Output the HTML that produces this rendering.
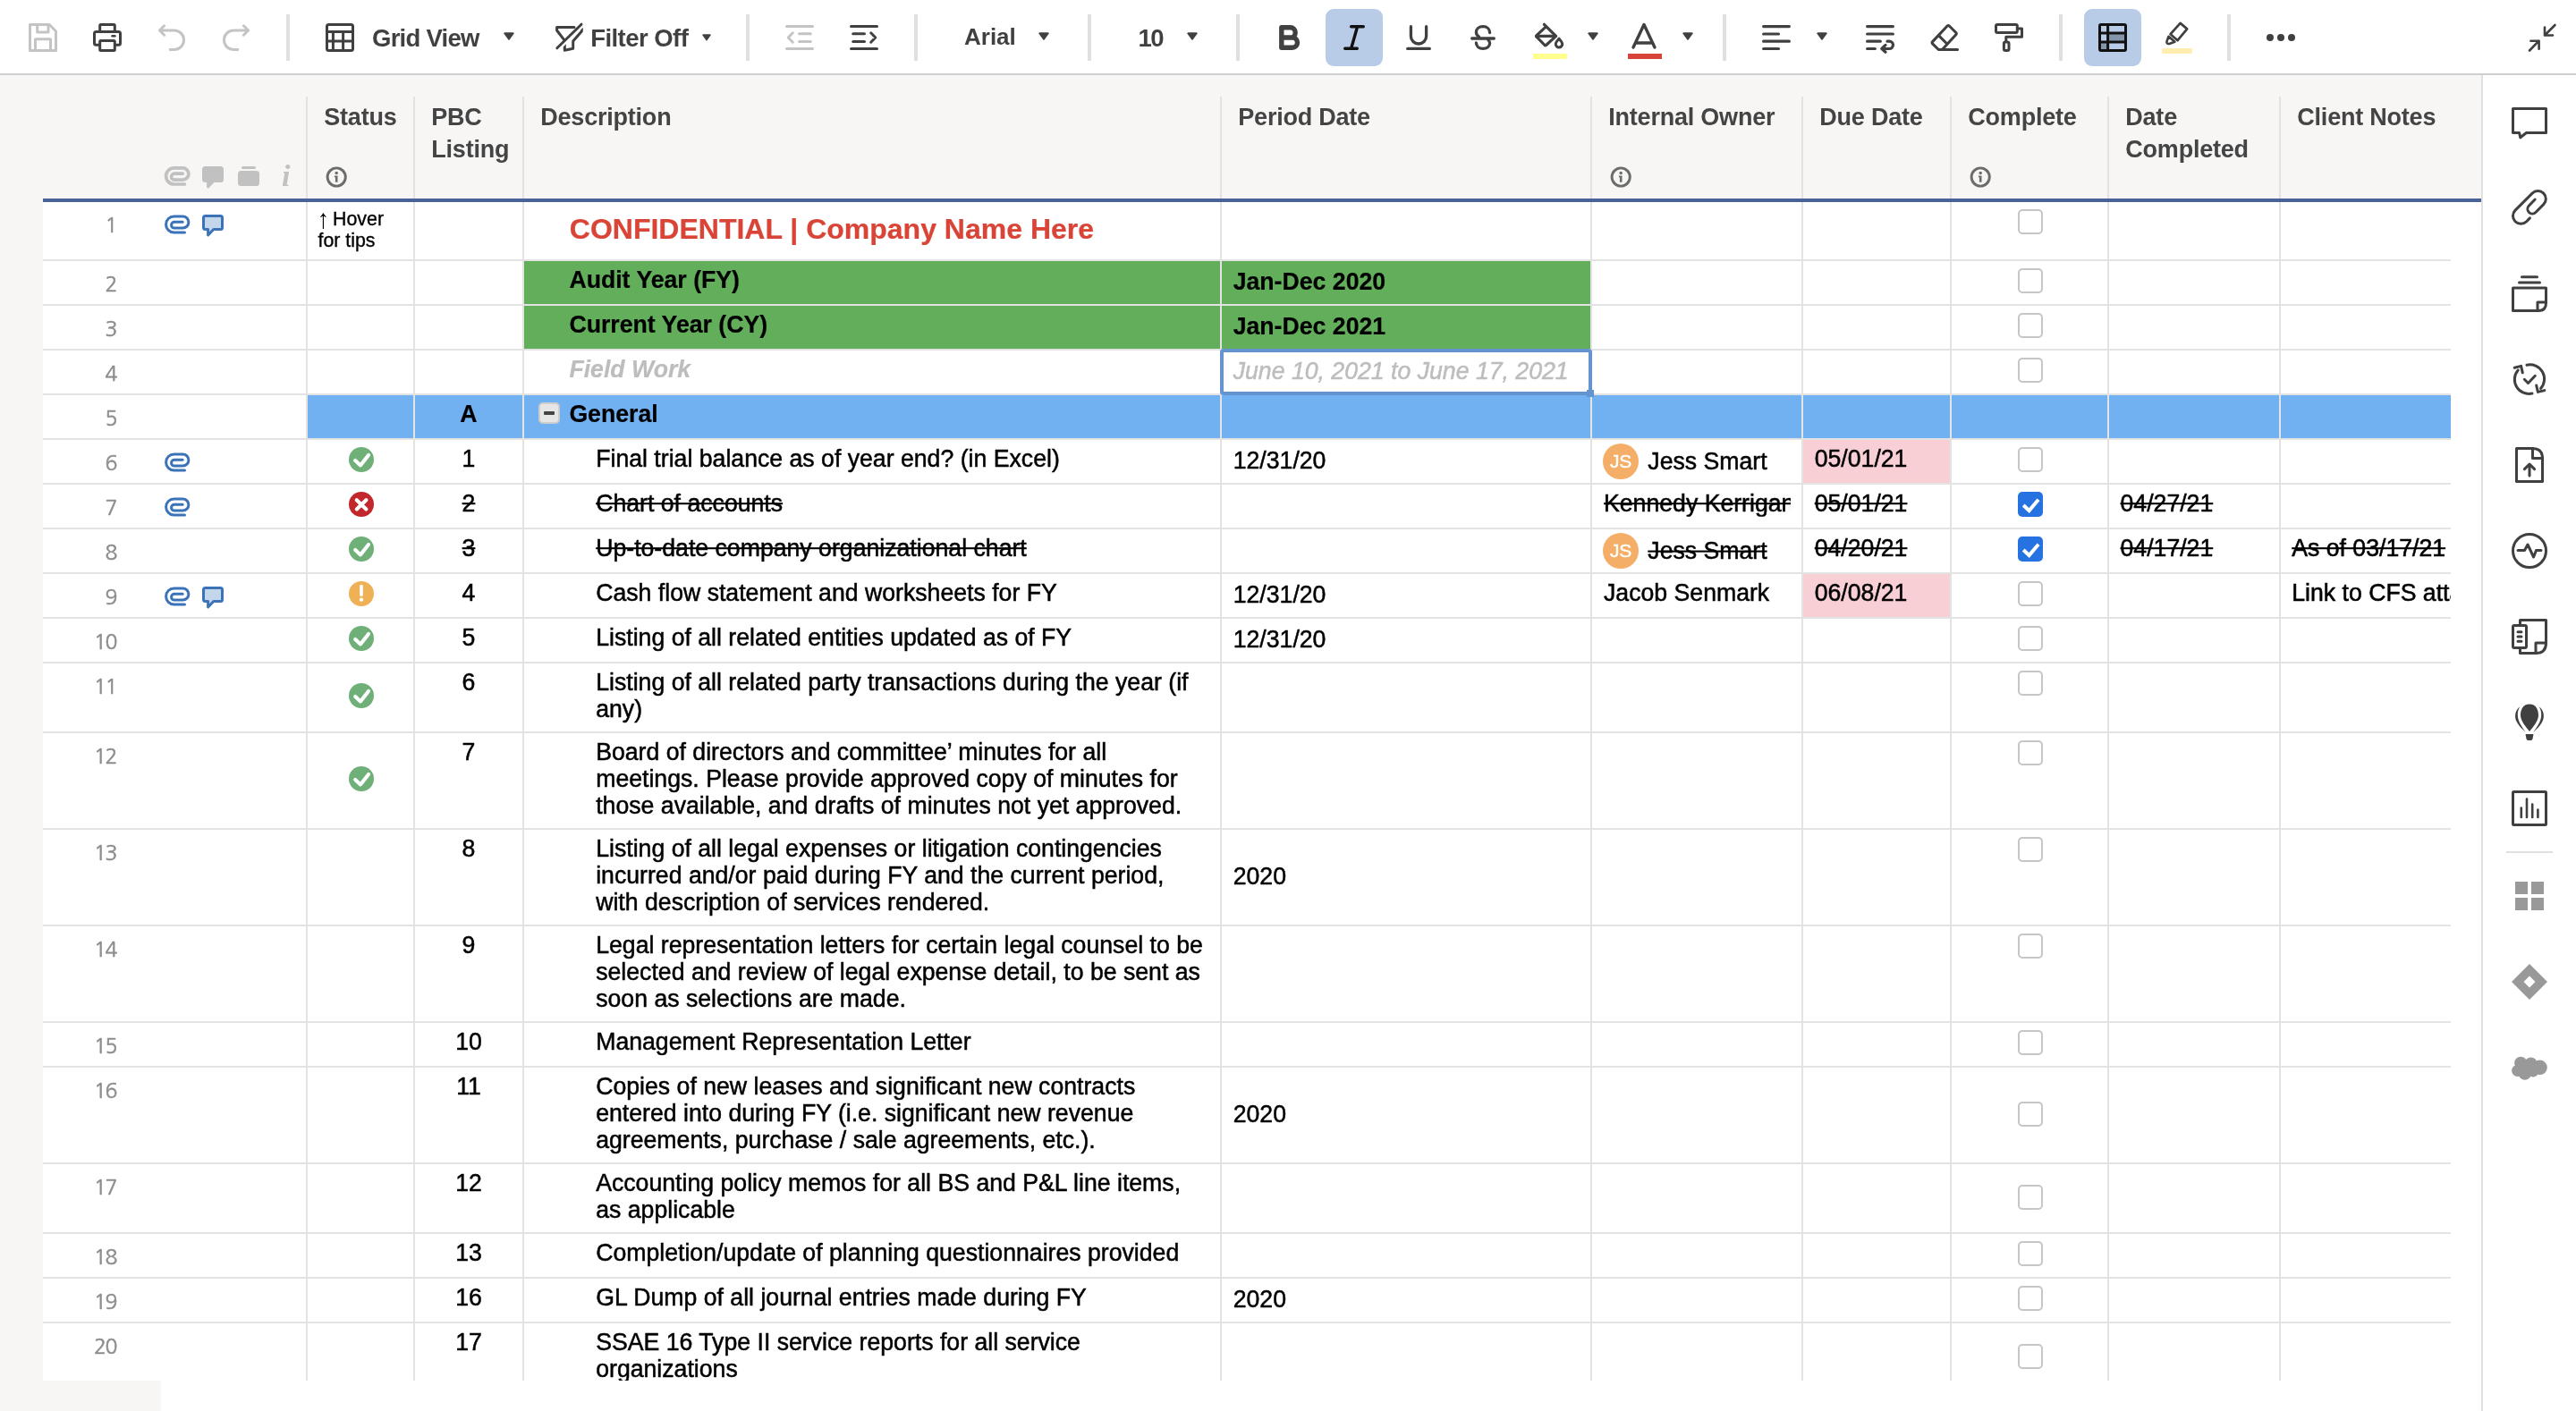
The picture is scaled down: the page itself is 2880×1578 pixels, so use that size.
<!DOCTYPE html>
<html lang="en"><head><meta charset="utf-8"><title>PBC Listing - Grid View</title>
<style>
html,body{margin:0;padding:0;}
body{width:2880px;height:1578px;position:relative;overflow:hidden;background:#fff;font-family:"Liberation Sans", Arial, sans-serif;}
.t{position:absolute;margin:0;padding:0;font-family:"Liberation Sans", Arial, sans-serif;}
.s{text-decoration:line-through;text-decoration-thickness:2px;}
</style></head><body><div id="app" style="position:absolute;left:0;top:0;width:2880px;height:1578px;will-change:transform;">
<div style="position:absolute;left:0px;top:0px;width:2880px;height:82px;background:#fff;"></div>
<div style="position:absolute;left:0px;top:82px;width:2880px;height:2px;background:#cfcfcf;"></div>
<svg style="position:absolute;left:32px;top:26px;overflow:visible;" width="32" height="32" viewBox="0 0 32 32"><path d="M1.5 1.5 H23.2 L30.5 9 V30.5 H1.5 Z" fill="none" stroke="#c4c4c4" stroke-width="3" stroke-linecap="round" stroke-linejoin="round"/><path d="M9.7 1.5 V10 H22 V1.5" fill="none" stroke="#c4c4c4" stroke-width="3" stroke-linecap="round" stroke-linejoin="round"/><path d="M7.5 30.5 V17.7 H24.5 V30.5" fill="none" stroke="#c4c4c4" stroke-width="3" stroke-linecap="round" stroke-linejoin="round"/></svg>
<svg style="position:absolute;left:104px;top:26px;overflow:visible;" width="32" height="32" viewBox="0 0 32 32"><rect x="7.7" y="1.5" width="16.6" height="8" rx="1" fill="none" stroke="#404040" stroke-width="3" stroke-linecap="round" stroke-linejoin="round"/><rect x="1.5" y="9.6" width="29" height="14.6" rx="2" fill="none" stroke="#404040" stroke-width="3" stroke-linecap="round" stroke-linejoin="round"/><rect x="7.7" y="19.5" width="16.6" height="11" rx="1" fill="#fff" stroke="#404040" stroke-width="3" stroke-linecap="round" stroke-linejoin="round"/><path d="M21.5 14.2 H24.5" fill="none" stroke="#404040" stroke-width="2.4" stroke-linecap="round" stroke-linejoin="round"/></svg>
<svg style="position:absolute;left:176px;top:26px;overflow:visible;" width="32" height="32" viewBox="0 0 32 32"><path d="M7.6 2.8 L2.4 8 L7.6 13.2 M2.6 8 H18.8 A10.75 10.75 0 0 1 18.8 29.5 H14.2" fill="none" stroke="#c4c4c4" stroke-width="3" stroke-linecap="round" stroke-linejoin="round"/></svg>
<svg style="position:absolute;left:248px;top:26px;overflow:visible;" width="32" height="32" viewBox="0 0 32 32"><g transform="translate(32,0) scale(-1,1)"><path d="M7.6 2.8 L2.4 8 L7.6 13.2 M2.6 8 H18.8 A10.75 10.75 0 0 1 18.8 29.5 H14.2" fill="none" stroke="#c4c4c4" stroke-width="3" stroke-linecap="round" stroke-linejoin="round"/></g></svg>
<div style="position:absolute;left:320px;top:16px;width:4px;height:52px;background:#e0e0e0;"></div>
<div style="position:absolute;left:834px;top:16px;width:4px;height:52px;background:#e0e0e0;"></div>
<div style="position:absolute;left:1022px;top:16px;width:4px;height:52px;background:#e0e0e0;"></div>
<div style="position:absolute;left:1216px;top:16px;width:4px;height:52px;background:#e0e0e0;"></div>
<div style="position:absolute;left:1382px;top:16px;width:4px;height:52px;background:#e0e0e0;"></div>
<div style="position:absolute;left:1926px;top:16px;width:4px;height:52px;background:#e0e0e0;"></div>
<div style="position:absolute;left:2302px;top:16px;width:4px;height:52px;background:#e0e0e0;"></div>
<div style="position:absolute;left:2490px;top:16px;width:4px;height:52px;background:#e0e0e0;"></div>
<svg style="position:absolute;left:364px;top:26px;overflow:visible;" width="32" height="32" viewBox="0 0 32 32"><rect x="1.5" y="1.5" width="29" height="29" rx="2" fill="none" stroke="#404040" stroke-width="3" stroke-linecap="round" stroke-linejoin="round"/><path d="M1.5 9.6 H30.5 M1.5 20 H30.5 M8.4 9.6 V30.5 M19.6 9.6 V30.5" fill="none" stroke="#404040" stroke-width="3" stroke-linecap="round" stroke-linejoin="round"/></svg>
<div class="t " style="left:416px;top:27.6px;white-space:nowrap;font-size:27.5px;line-height:30px;color:#404040;font-weight:bold;font-style:normal;text-align:left;letter-spacing:-0.75px;">Grid View</div>
<svg style="position:absolute;left:563px;top:36px;overflow:visible;" width="12" height="9" viewBox="0 0 12 9"><path d="M1.2 0.2 H10.8 L11.9 1.3 L6.6 8.6 Q6 9.3 5.4 8.6 L0.1 1.3 Z" fill="#404040"/></svg>
<svg style="position:absolute;left:620px;top:26px;overflow:visible;" width="32" height="32" viewBox="0 0 32 32"><path d="M22 4.6 H2.6 V8 L11.3 19.3 V30.3 L20.7 28.3 V20 L30.3 9 V5.5" fill="none" stroke="#404040" stroke-width="3" stroke-linecap="round" stroke-linejoin="round"/><path d="M4.5 29.5 L31.7 2.9" fill="none" stroke="#fff" stroke-width="2.8" stroke-linecap="butt"/><path d="M2.8 27.8 L30 1.2" fill="none" stroke="#404040" stroke-width="3" stroke-linecap="round" stroke-linejoin="round"/></svg>
<div class="t " style="left:660.2px;top:27.6px;white-space:nowrap;font-size:27.5px;line-height:30px;color:#404040;font-weight:bold;font-style:normal;text-align:left;letter-spacing:-0.55px;">Filter Off</div>
<svg style="position:absolute;left:785px;top:38px;overflow:visible;" width="10" height="7.5" viewBox="0 0 12 9"><path d="M1.2 0.2 H10.8 L11.9 1.3 L6.6 8.6 Q6 9.3 5.4 8.6 L0.1 1.3 Z" fill="#404040"/></svg>
<svg style="position:absolute;left:878px;top:28px;overflow:visible;" width="32" height="28" viewBox="0 0 32 28"><path d="M1.5 1.5 H30.5 M1.5 26.5 H30.5 M15.5 9.7 H28.3 M15.5 18.4 H28.3 M8.3 8.8 L3.2 14 L8.3 19.2" fill="none" stroke="#c4c4c4" stroke-width="3" stroke-linecap="round" stroke-linejoin="round"/></svg>
<svg style="position:absolute;left:950px;top:28px;overflow:visible;" width="32" height="28" viewBox="0 0 32 28"><path d="M1.5 1.5 H30.5 M1.5 26.5 H30.5 M3.7 9.7 H16.5 M3.7 18.4 H16.5 M23.7 8.8 L28.8 14 L23.7 19.2" fill="none" stroke="#404040" stroke-width="3" stroke-linecap="round" stroke-linejoin="round"/></svg>
<div class="t " style="left:1078px;top:26.2px;white-space:nowrap;font-size:26px;line-height:30px;color:#404040;font-weight:bold;font-style:normal;text-align:left;">Arial</div>
<svg style="position:absolute;left:1161px;top:36px;overflow:visible;" width="12" height="9" viewBox="0 0 12 9"><path d="M1.2 0.2 H10.8 L11.9 1.3 L6.6 8.6 Q6 9.3 5.4 8.6 L0.1 1.3 Z" fill="#404040"/></svg>
<div class="t " style="left:1272.5px;top:27.6px;white-space:nowrap;font-size:27.5px;line-height:30px;color:#404040;font-weight:bold;font-style:normal;text-align:left;letter-spacing:-1.5px;">10</div>
<svg style="position:absolute;left:1327px;top:36px;overflow:visible;" width="12" height="9" viewBox="0 0 12 9"><path d="M1.2 0.2 H10.8 L11.9 1.3 L6.6 8.6 Q6 9.3 5.4 8.6 L0.1 1.3 Z" fill="#404040"/></svg>
<svg style="position:absolute;left:1430px;top:28px;overflow:visible;" width="24" height="28" viewBox="0 0 24 28"><path d="M2.8 2.8 H12.6 A5.6 5.6 0 0 1 12.6 14 H2.8 Z M2.8 14 H14.9 A5.6 5.6 0 0 1 14.9 25.2 H2.8 Z" fill="none" stroke="#404040" stroke-width="5.4" stroke-linecap="round" stroke-linejoin="round"/></svg>
<div style="position:absolute;left:1482px;top:10px;width:64px;height:64px;background:#b8cce8;border-radius:9px;"></div>
<svg style="position:absolute;left:1502px;top:28px;overflow:visible;" width="24" height="28" viewBox="0 0 24 28"><path d="M8.6 1.7 H22.3 M1.7 26.3 H15.3 M15.6 1.7 L8.6 26.3" fill="none" stroke="#111" stroke-width="3.4" stroke-linecap="round" stroke-linejoin="round"/></svg>
<svg style="position:absolute;left:1572px;top:28px;overflow:visible;" width="28" height="28" viewBox="0 0 28 28"><path d="M5.4 1.7 V12.4 A8.6 8.6 0 0 0 22.6 12.4 V1.7 M1.7 26.4 H26.3" fill="none" stroke="#404040" stroke-width="3.3" stroke-linecap="round" stroke-linejoin="round"/></svg>
<svg style="position:absolute;left:1644px;top:28px;overflow:visible;" width="28" height="28" viewBox="0 0 28 28"><path d="M21.6 8.6 C21.6 4.5 18.5 1.7 14 1.7 C9.5 1.7 6.4 4.3 6.4 8 C6.4 10.3 7.6 12 9.5 12.9" fill="none" stroke="#404040" stroke-width="3.3" stroke-linecap="round" stroke-linejoin="round"/><path d="M6.4 20 C6.7 24 9.7 26.4 14 26.4 C18.4 26.4 21.6 24 21.6 20.3 C21.6 18.6 20.9 17.4 19.8 16.6" fill="none" stroke="#404040" stroke-width="3.3" stroke-linecap="round" stroke-linejoin="round"/><path d="M1.7 15 H26.3" fill="none" stroke="#404040" stroke-width="3.3" stroke-linecap="round" stroke-linejoin="round"/></svg>
<svg style="position:absolute;left:1715px;top:25px;overflow:visible;" width="34" height="30" viewBox="0 0 34 30"><path d="M11.4 2.3 L24.6 15.3 L13.6 25.5 Q12.8 26.2 12 25.5 L2.9 16.2 Q2.1 15.4 2.9 14.6 L13.1 5.1" fill="none" stroke="#404040" stroke-width="3.2" stroke-linecap="round" stroke-linejoin="round"/><path d="M2.9 15.4 H24" fill="none" stroke="#404040" stroke-width="3.2" stroke-linecap="round" stroke-linejoin="round"/><path d="M28 18.2 C30 20.4 31.7 22.3 31.7 24.3 A3.7 3.7 0 0 1 24.3 24.3 C24.3 22.3 26 20.4 28 18.2 Z" fill="none" stroke="#404040" stroke-width="3" stroke-linecap="round" stroke-linejoin="round"/></svg>
<div style="position:absolute;left:1714px;top:60px;width:38px;height:6px;background:#ffff8d;"></div>
<svg style="position:absolute;left:1775px;top:36px;overflow:visible;" width="12" height="9" viewBox="0 0 12 9"><path d="M1.2 0.2 H10.8 L11.9 1.3 L6.6 8.6 Q6 9.3 5.4 8.6 L0.1 1.3 Z" fill="#404040"/></svg>
<svg style="position:absolute;left:1824px;top:25px;overflow:visible;" width="28" height="30" viewBox="0 0 28 30"><path d="M2 28 L14 2.5 L26 28 M5.6 23 H22.4" fill="none" stroke="#404040" stroke-width="3.4" stroke-linecap="round" stroke-linejoin="round"/></svg>
<div style="position:absolute;left:1820px;top:60px;width:38px;height:6px;background:#d84437;"></div>
<svg style="position:absolute;left:1881px;top:36px;overflow:visible;" width="12" height="9" viewBox="0 0 12 9"><path d="M1.2 0.2 H10.8 L11.9 1.3 L6.6 8.6 Q6 9.3 5.4 8.6 L0.1 1.3 Z" fill="#404040"/></svg>
<svg style="position:absolute;left:1970px;top:28px;overflow:visible;" width="32" height="28" viewBox="0 0 32 28"><path d="M1.6 1.6 H30.4 M1.6 10 H18.5 M1.6 18.2 H30.4 M1.6 26.5 H18.5" fill="none" stroke="#404040" stroke-width="3.2" stroke-linecap="round" stroke-linejoin="round"/></svg>
<svg style="position:absolute;left:2031px;top:36px;overflow:visible;" width="12" height="9" viewBox="0 0 12 9"><path d="M1.2 0.2 H10.8 L11.9 1.3 L6.6 8.6 Q6 9.3 5.4 8.6 L0.1 1.3 Z" fill="#404040"/></svg>
<svg style="position:absolute;left:2086px;top:28px;overflow:visible;" width="33" height="31" viewBox="0 0 33 31"><path d="M1.6 1.6 H30.4 M1.6 10 H30.4 M1.6 18.2 H16.3 M1.6 26.5 H10.3" fill="none" stroke="#404040" stroke-width="3.2" stroke-linecap="round" stroke-linejoin="round"/><path d="M24 18.2 H26.3 A4.15 4.15 0 0 1 26.3 26.5 H18.5 M22 22.4 L17.8 26.5 L22 30.2" fill="none" stroke="#404040" stroke-width="3.2" stroke-linecap="round" stroke-linejoin="round"/></svg>
<svg style="position:absolute;left:2158px;top:26px;overflow:visible;" width="33" height="32" viewBox="0 0 33 32"><path d="M21.3 3 L28.8 10.5 Q29.9 11.6 28.8 12.7 L13.4 29.5 H9.3 L2.6 22.8 Q1.5 21.7 2.6 20.6 L19.1 3 Q20.2 1.9 21.3 3 Z" fill="none" stroke="#404040" stroke-width="3.1" stroke-linecap="round" stroke-linejoin="round"/><path d="M13.4 29.5 H30.5 M9.4 13.6 L17.8 22" fill="none" stroke="#404040" stroke-width="3.1" stroke-linecap="round" stroke-linejoin="round"/></svg>
<svg style="position:absolute;left:2230px;top:26px;overflow:visible;" width="33" height="32" viewBox="0 0 33 32"><rect x="1.5" y="1.5" width="23.8" height="9" rx="1.5" fill="none" stroke="#404040" stroke-width="3" stroke-linecap="round" stroke-linejoin="round"/><path d="M25.5 6 H30.5 V15.2 H12.8 V19.5" fill="none" stroke="#404040" stroke-width="3" stroke-linecap="round" stroke-linejoin="round"/><rect x="10.4" y="21" width="5.6" height="9.5" rx="1.8" fill="none" stroke="#404040" stroke-width="3" stroke-linecap="round" stroke-linejoin="round"/></svg>
<div style="position:absolute;left:2330px;top:10px;width:64px;height:64px;background:#b8cce8;border-radius:9px;"></div>
<svg style="position:absolute;left:2346px;top:26px;overflow:visible;" width="32" height="32" viewBox="0 0 32 32"><rect x="11" y="11" width="19" height="9.5" fill="#8596ab"/><rect x="2" y="21" width="9" height="9" fill="#8596ab"/><rect x="1.5" y="1.5" width="29" height="29" rx="1.5" fill="none" stroke="#111" stroke-width="3" stroke-linecap="round" stroke-linejoin="round"/><path d="M10.6 1.5 V30.5 M1.5 11 H30.5 M1.5 21 H30.5" fill="none" stroke="#111" stroke-width="3" stroke-linecap="round" stroke-linejoin="round"/></svg>
<svg style="position:absolute;left:2417px;top:23px;overflow:visible;" width="36" height="32" viewBox="0 0 36 32"><path d="M7.5 17.8 L14.4 23.8 L8.4 25.9 Q5 26.6 5.5 23.4 Z" fill="none" stroke="#404040" stroke-width="2.6" stroke-linecap="round" stroke-linejoin="round"/><path d="M20.6 2.9 L28.2 9.4 L17.6 22.2 L9.6 15.2 Z" fill="#fff" stroke="#404040" stroke-width="2.7" stroke-linecap="round" stroke-linejoin="round"/></svg>
<div style="position:absolute;left:2417px;top:54px;width:34px;height:6px;background:#ffedb0;border-radius:2px;"></div>
<svg style="position:absolute;left:2532px;top:36px;overflow:visible;" width="36" height="12" viewBox="0 0 36 12"><circle cx="6" cy="6" r="4" fill="#404040"/><circle cx="18" cy="6" r="4" fill="#404040"/><circle cx="30" cy="6" r="4" fill="#404040"/></svg>
<svg style="position:absolute;left:2826px;top:26px;overflow:visible;" width="32" height="32" viewBox="0 0 32 32"><path d="M30.5 2 L19 13.5 M19 4.5 V13.5 H28" fill="none" stroke="#404040" stroke-width="2.6" stroke-linecap="round" stroke-linejoin="round"/><path d="M2 30.5 L12.6 19.7 M3.4 19.7 H12.6 V28.8" fill="none" stroke="#404040" stroke-width="2.6" stroke-linecap="round" stroke-linejoin="round"/></svg>
<div style="position:absolute;left:0px;top:84px;width:2774px;height:138px;background:#f7f6f5;"></div>
<div style="position:absolute;left:0px;top:222px;width:48px;height:1356px;background:#f7f6f5;"></div>
<div style="position:absolute;left:0px;top:1544px;width:180px;height:34px;background:#f7f6f5;"></div>
<div style="position:absolute;left:2774px;top:84px;width:2px;height:1494px;background:#e0e0e0;"></div>
<div style="position:absolute;left:342px;top:108px;width:2px;height:114px;background:#e2e2e2;"></div>
<div style="position:absolute;left:462px;top:108px;width:2px;height:114px;background:#e2e2e2;"></div>
<div style="position:absolute;left:584px;top:108px;width:2px;height:114px;background:#e2e2e2;"></div>
<div style="position:absolute;left:1364px;top:108px;width:2px;height:114px;background:#e2e2e2;"></div>
<div style="position:absolute;left:1778px;top:108px;width:2px;height:114px;background:#e2e2e2;"></div>
<div style="position:absolute;left:2014px;top:108px;width:2px;height:114px;background:#e2e2e2;"></div>
<div style="position:absolute;left:2180px;top:108px;width:2px;height:114px;background:#e2e2e2;"></div>
<div style="position:absolute;left:2356px;top:108px;width:2px;height:114px;background:#e2e2e2;"></div>
<div style="position:absolute;left:2548px;top:108px;width:2px;height:114px;background:#e2e2e2;"></div>
<div class="t " style="left:362.3px;top:113.2px;white-space:nowrap;font-size:27px;line-height:36px;color:#444;font-weight:bold;font-style:normal;text-align:left;letter-spacing:-0.22px;">Status</div>
<div class="t " style="left:482.3px;top:113.2px;white-space:nowrap;font-size:27px;line-height:36px;color:#444;font-weight:bold;font-style:normal;text-align:left;letter-spacing:-0.22px;">PBC<br>Listing</div>
<div class="t " style="left:604.3px;top:113.2px;white-space:nowrap;font-size:27px;line-height:36px;color:#444;font-weight:bold;font-style:normal;text-align:left;letter-spacing:-0.22px;">Description</div>
<div class="t " style="left:1384.3px;top:113.2px;white-space:nowrap;font-size:27px;line-height:36px;color:#444;font-weight:bold;font-style:normal;text-align:left;letter-spacing:-0.22px;">Period Date</div>
<div class="t " style="left:1798.3px;top:113.2px;white-space:nowrap;font-size:27px;line-height:36px;color:#444;font-weight:bold;font-style:normal;text-align:left;letter-spacing:-0.22px;">Internal Owner</div>
<div class="t " style="left:2034.3px;top:113.2px;white-space:nowrap;font-size:27px;line-height:36px;color:#444;font-weight:bold;font-style:normal;text-align:left;letter-spacing:-0.22px;">Due Date</div>
<div class="t " style="left:2200.3px;top:113.2px;white-space:nowrap;font-size:27px;line-height:36px;color:#444;font-weight:bold;font-style:normal;text-align:left;letter-spacing:-0.22px;">Complete</div>
<div class="t " style="left:2376.3px;top:113.2px;white-space:nowrap;font-size:27px;line-height:36px;color:#444;font-weight:bold;font-style:normal;text-align:left;letter-spacing:-0.22px;">Date<br>Completed</div>
<div class="t " style="left:2568.3px;top:113.2px;white-space:nowrap;font-size:27px;line-height:36px;color:#444;font-weight:bold;font-style:normal;text-align:left;letter-spacing:-0.22px;">Client Notes</div>
<svg style="position:absolute;left:364px;top:186px;overflow:visible;" width="24" height="24" viewBox="0 0 24 24"><circle cx="12.2" cy="12" r="10.1" fill="none" stroke="#6c6c6c" stroke-width="2.9"/><circle cx="12.2" cy="7.5" r="1.75" fill="#6c6c6c"/><path d="M9.9 10.5 H13.5 V17.7 H10.9 V12.3 H9.9 Z" fill="#6c6c6c"/></svg>
<svg style="position:absolute;left:1800px;top:186px;overflow:visible;" width="24" height="24" viewBox="0 0 24 24"><circle cx="12.2" cy="12" r="10.1" fill="none" stroke="#6c6c6c" stroke-width="2.9"/><circle cx="12.2" cy="7.5" r="1.75" fill="#6c6c6c"/><path d="M9.9 10.5 H13.5 V17.7 H10.9 V12.3 H9.9 Z" fill="#6c6c6c"/></svg>
<svg style="position:absolute;left:2202px;top:186px;overflow:visible;" width="24" height="24" viewBox="0 0 24 24"><circle cx="12.2" cy="12" r="10.1" fill="none" stroke="#6c6c6c" stroke-width="2.9"/><circle cx="12.2" cy="7.5" r="1.75" fill="#6c6c6c"/><path d="M9.9 10.5 H13.5 V17.7 H10.9 V12.3 H9.9 Z" fill="#6c6c6c"/></svg>
<svg style="position:absolute;left:184px;top:186px;overflow:visible;" width="28" height="22" viewBox="0 0 28 22"><path d="M22.5 20 H10.65 A9.05 9.05 0 0 1 10.65 1.9 H20.3 A6.6 6.6 0 0 1 20.3 15.1 H11 A3.45 3.45 0 0 1 11 8.2 H20.2" fill="none" stroke="#c1c1c1" stroke-width="3.7" stroke-linecap="round"/></svg>
<svg style="position:absolute;left:226px;top:186px;overflow:visible;" width="24" height="25" viewBox="0 0 24 25"><path d="M3.5 1.5 H20.5 Q22.5 1.5 22.5 3.5 V14.5 Q22.5 16.5 20.5 16.5 H12.8 L6.6 23 V16.5 H3.5 Q1.5 16.5 1.5 14.5 V3.5 Q1.5 1.5 3.5 1.5 Z" fill="#c1c1c1" stroke="#c1c1c1" stroke-width="3" stroke-linejoin="round"/></svg>
<svg style="position:absolute;left:266px;top:186px;overflow:visible;" width="24" height="22" viewBox="0 0 24 22"><rect x="4" y="0" width="16" height="3" rx="1.5" fill="#c1c1c1"/><rect x="0" y="5" width="24" height="17" rx="3.5" fill="#c1c1c1"/></svg>
<div class="t " style="left:315px;top:178.8px;white-space:nowrap;font-size:34px;line-height:36px;color:#c1c1c1;font-weight:bold;font-style:italic;text-align:left;font-family:'Liberation Serif',serif;">i</div>
<div style="position:absolute;left:48px;top:222px;width:2726px;height:4px;background:#4a6199;"></div>
<div style="position:absolute;left:586px;top:292px;width:778px;height:48px;background:#62ae5b;"></div>
<div style="position:absolute;left:1366px;top:292px;width:412px;height:48px;background:#62ae5b;"></div>
<div style="position:absolute;left:586px;top:342px;width:778px;height:48px;background:#62ae5b;"></div>
<div style="position:absolute;left:1366px;top:342px;width:412px;height:48px;background:#62ae5b;"></div>
<div style="position:absolute;left:344px;top:442px;width:118px;height:48px;background:#71b1f2;"></div>
<div style="position:absolute;left:464px;top:442px;width:120px;height:48px;background:#71b1f2;"></div>
<div style="position:absolute;left:586px;top:442px;width:778px;height:48px;background:#71b1f2;"></div>
<div style="position:absolute;left:1366px;top:442px;width:412px;height:48px;background:#71b1f2;"></div>
<div style="position:absolute;left:1780px;top:442px;width:234px;height:48px;background:#71b1f2;"></div>
<div style="position:absolute;left:2016px;top:442px;width:164px;height:48px;background:#71b1f2;"></div>
<div style="position:absolute;left:2182px;top:442px;width:174px;height:48px;background:#71b1f2;"></div>
<div style="position:absolute;left:2358px;top:442px;width:190px;height:48px;background:#71b1f2;"></div>
<div style="position:absolute;left:2550px;top:442px;width:190px;height:48px;background:#71b1f2;"></div>
<div style="position:absolute;left:2016px;top:492px;width:164px;height:48px;background:#f8cfd5;"></div>
<div style="position:absolute;left:2016px;top:642px;width:164px;height:48px;background:#f8cfd5;"></div>
<div style="position:absolute;left:48px;top:290px;width:2692px;height:2px;background:#e3e3e3;"></div>
<div style="position:absolute;left:48px;top:340px;width:2692px;height:2px;background:#e3e3e3;"></div>
<div style="position:absolute;left:48px;top:390px;width:2692px;height:2px;background:#e3e3e3;"></div>
<div style="position:absolute;left:48px;top:440px;width:2692px;height:2px;background:#e3e3e3;"></div>
<div style="position:absolute;left:48px;top:490px;width:2692px;height:2px;background:#e3e3e3;"></div>
<div style="position:absolute;left:48px;top:540px;width:2692px;height:2px;background:#e3e3e3;"></div>
<div style="position:absolute;left:48px;top:590px;width:2692px;height:2px;background:#e3e3e3;"></div>
<div style="position:absolute;left:48px;top:640px;width:2692px;height:2px;background:#e3e3e3;"></div>
<div style="position:absolute;left:48px;top:690px;width:2692px;height:2px;background:#e3e3e3;"></div>
<div style="position:absolute;left:48px;top:740px;width:2692px;height:2px;background:#e3e3e3;"></div>
<div style="position:absolute;left:48px;top:818px;width:2692px;height:2px;background:#e3e3e3;"></div>
<div style="position:absolute;left:48px;top:926px;width:2692px;height:2px;background:#e3e3e3;"></div>
<div style="position:absolute;left:48px;top:1034px;width:2692px;height:2px;background:#e3e3e3;"></div>
<div style="position:absolute;left:48px;top:1142px;width:2692px;height:2px;background:#e3e3e3;"></div>
<div style="position:absolute;left:48px;top:1192px;width:2692px;height:2px;background:#e3e3e3;"></div>
<div style="position:absolute;left:48px;top:1300px;width:2692px;height:2px;background:#e3e3e3;"></div>
<div style="position:absolute;left:48px;top:1378px;width:2692px;height:2px;background:#e3e3e3;"></div>
<div style="position:absolute;left:48px;top:1428px;width:2692px;height:2px;background:#e3e3e3;"></div>
<div style="position:absolute;left:48px;top:1478px;width:2692px;height:2px;background:#e3e3e3;"></div>
<div style="position:absolute;left:342px;top:226px;width:2px;height:1318px;background:#e3e3e3;"></div>
<div style="position:absolute;left:462px;top:226px;width:2px;height:1318px;background:#e3e3e3;"></div>
<div style="position:absolute;left:584px;top:226px;width:2px;height:1318px;background:#e3e3e3;"></div>
<div style="position:absolute;left:1364px;top:226px;width:2px;height:1318px;background:#e3e3e3;"></div>
<div style="position:absolute;left:1778px;top:226px;width:2px;height:1318px;background:#e3e3e3;"></div>
<div style="position:absolute;left:2014px;top:226px;width:2px;height:1318px;background:#e3e3e3;"></div>
<div style="position:absolute;left:2180px;top:226px;width:2px;height:1318px;background:#e3e3e3;"></div>
<div style="position:absolute;left:2356px;top:226px;width:2px;height:1318px;background:#e3e3e3;"></div>
<div style="position:absolute;left:2548px;top:226px;width:2px;height:1318px;background:#e3e3e3;"></div>
<div class="t " style="left:52px;top:236.9px;width:78.2px;font-size:23px;line-height:30px;color:#8e8e8e;font-weight:normal;font-style:normal;text-align:right;font-family:'NanumGothic','Liberation Sans',sans-serif;letter-spacing:-1.3px;-webkit-text-stroke-width:0.6px;">1</div>
<div class="t " style="left:52px;top:302.9px;width:78.2px;font-size:23px;line-height:30px;color:#8e8e8e;font-weight:normal;font-style:normal;text-align:right;font-family:'NanumGothic','Liberation Sans',sans-serif;letter-spacing:-1.3px;-webkit-text-stroke-width:0.6px;">2</div>
<div class="t " style="left:52px;top:352.9px;width:78.2px;font-size:23px;line-height:30px;color:#8e8e8e;font-weight:normal;font-style:normal;text-align:right;font-family:'NanumGothic','Liberation Sans',sans-serif;letter-spacing:-1.3px;-webkit-text-stroke-width:0.6px;">3</div>
<div class="t " style="left:52px;top:402.9px;width:78.2px;font-size:23px;line-height:30px;color:#8e8e8e;font-weight:normal;font-style:normal;text-align:right;font-family:'NanumGothic','Liberation Sans',sans-serif;letter-spacing:-1.3px;-webkit-text-stroke-width:0.6px;">4</div>
<div class="t " style="left:52px;top:452.9px;width:78.2px;font-size:23px;line-height:30px;color:#8e8e8e;font-weight:normal;font-style:normal;text-align:right;font-family:'NanumGothic','Liberation Sans',sans-serif;letter-spacing:-1.3px;-webkit-text-stroke-width:0.6px;">5</div>
<div class="t " style="left:52px;top:502.9px;width:78.2px;font-size:23px;line-height:30px;color:#8e8e8e;font-weight:normal;font-style:normal;text-align:right;font-family:'NanumGothic','Liberation Sans',sans-serif;letter-spacing:-1.3px;-webkit-text-stroke-width:0.6px;">6</div>
<div class="t " style="left:52px;top:552.9px;width:78.2px;font-size:23px;line-height:30px;color:#8e8e8e;font-weight:normal;font-style:normal;text-align:right;font-family:'NanumGothic','Liberation Sans',sans-serif;letter-spacing:-1.3px;-webkit-text-stroke-width:0.6px;">7</div>
<div class="t " style="left:52px;top:602.9px;width:78.2px;font-size:23px;line-height:30px;color:#8e8e8e;font-weight:normal;font-style:normal;text-align:right;font-family:'NanumGothic','Liberation Sans',sans-serif;letter-spacing:-1.3px;-webkit-text-stroke-width:0.6px;">8</div>
<div class="t " style="left:52px;top:652.9px;width:78.2px;font-size:23px;line-height:30px;color:#8e8e8e;font-weight:normal;font-style:normal;text-align:right;font-family:'NanumGothic','Liberation Sans',sans-serif;letter-spacing:-1.3px;-webkit-text-stroke-width:0.6px;">9</div>
<div class="t " style="left:52px;top:702.9px;width:78.2px;font-size:23px;line-height:30px;color:#8e8e8e;font-weight:normal;font-style:normal;text-align:right;font-family:'NanumGothic','Liberation Sans',sans-serif;letter-spacing:-1.3px;-webkit-text-stroke-width:0.6px;">10</div>
<div class="t " style="left:52px;top:752.9px;width:78.2px;font-size:23px;line-height:30px;color:#8e8e8e;font-weight:normal;font-style:normal;text-align:right;font-family:'NanumGothic','Liberation Sans',sans-serif;letter-spacing:-1.3px;-webkit-text-stroke-width:0.6px;">11</div>
<div class="t " style="left:52px;top:830.9px;width:78.2px;font-size:23px;line-height:30px;color:#8e8e8e;font-weight:normal;font-style:normal;text-align:right;font-family:'NanumGothic','Liberation Sans',sans-serif;letter-spacing:-1.3px;-webkit-text-stroke-width:0.6px;">12</div>
<div class="t " style="left:52px;top:938.9px;width:78.2px;font-size:23px;line-height:30px;color:#8e8e8e;font-weight:normal;font-style:normal;text-align:right;font-family:'NanumGothic','Liberation Sans',sans-serif;letter-spacing:-1.3px;-webkit-text-stroke-width:0.6px;">13</div>
<div class="t " style="left:52px;top:1046.9px;width:78.2px;font-size:23px;line-height:30px;color:#8e8e8e;font-weight:normal;font-style:normal;text-align:right;font-family:'NanumGothic','Liberation Sans',sans-serif;letter-spacing:-1.3px;-webkit-text-stroke-width:0.6px;">14</div>
<div class="t " style="left:52px;top:1154.9px;width:78.2px;font-size:23px;line-height:30px;color:#8e8e8e;font-weight:normal;font-style:normal;text-align:right;font-family:'NanumGothic','Liberation Sans',sans-serif;letter-spacing:-1.3px;-webkit-text-stroke-width:0.6px;">15</div>
<div class="t " style="left:52px;top:1204.9px;width:78.2px;font-size:23px;line-height:30px;color:#8e8e8e;font-weight:normal;font-style:normal;text-align:right;font-family:'NanumGothic','Liberation Sans',sans-serif;letter-spacing:-1.3px;-webkit-text-stroke-width:0.6px;">16</div>
<div class="t " style="left:52px;top:1312.9px;width:78.2px;font-size:23px;line-height:30px;color:#8e8e8e;font-weight:normal;font-style:normal;text-align:right;font-family:'NanumGothic','Liberation Sans',sans-serif;letter-spacing:-1.3px;-webkit-text-stroke-width:0.6px;">17</div>
<div class="t " style="left:52px;top:1390.9px;width:78.2px;font-size:23px;line-height:30px;color:#8e8e8e;font-weight:normal;font-style:normal;text-align:right;font-family:'NanumGothic','Liberation Sans',sans-serif;letter-spacing:-1.3px;-webkit-text-stroke-width:0.6px;">18</div>
<div class="t " style="left:52px;top:1440.9px;width:78.2px;font-size:23px;line-height:30px;color:#8e8e8e;font-weight:normal;font-style:normal;text-align:right;font-family:'NanumGothic','Liberation Sans',sans-serif;letter-spacing:-1.3px;-webkit-text-stroke-width:0.6px;">19</div>
<div class="t " style="left:52px;top:1490.9px;width:78.2px;font-size:23px;line-height:30px;color:#8e8e8e;font-weight:normal;font-style:normal;text-align:right;font-family:'NanumGothic','Liberation Sans',sans-serif;letter-spacing:-1.3px;-webkit-text-stroke-width:0.6px;">20</div>
<svg style="position:absolute;left:184px;top:240px;overflow:visible;" width="28" height="22" viewBox="0 0 28 22"><path d="M22.5 20 H10.65 A9.05 9.05 0 0 1 10.65 1.9 H20.3 A6.6 6.6 0 0 1 20.3 15.1 H11 A3.45 3.45 0 0 1 11 8.2 H20.2" fill="none" stroke="#3b73b9" stroke-width="3" stroke-linecap="round"/></svg>
<svg style="position:absolute;left:184px;top:506px;overflow:visible;" width="28" height="22" viewBox="0 0 28 22"><path d="M22.5 20 H10.65 A9.05 9.05 0 0 1 10.65 1.9 H20.3 A6.6 6.6 0 0 1 20.3 15.1 H11 A3.45 3.45 0 0 1 11 8.2 H20.2" fill="none" stroke="#3b73b9" stroke-width="3" stroke-linecap="round"/></svg>
<svg style="position:absolute;left:184px;top:556px;overflow:visible;" width="28" height="22" viewBox="0 0 28 22"><path d="M22.5 20 H10.65 A9.05 9.05 0 0 1 10.65 1.9 H20.3 A6.6 6.6 0 0 1 20.3 15.1 H11 A3.45 3.45 0 0 1 11 8.2 H20.2" fill="none" stroke="#3b73b9" stroke-width="3" stroke-linecap="round"/></svg>
<svg style="position:absolute;left:184px;top:656px;overflow:visible;" width="28" height="22" viewBox="0 0 28 22"><path d="M22.5 20 H10.65 A9.05 9.05 0 0 1 10.65 1.9 H20.3 A6.6 6.6 0 0 1 20.3 15.1 H11 A3.45 3.45 0 0 1 11 8.2 H20.2" fill="none" stroke="#3b73b9" stroke-width="3" stroke-linecap="round"/></svg>
<svg style="position:absolute;left:226px;top:240px;overflow:visible;" width="24" height="25" viewBox="0 0 24 25"><path d="M3.5 1.5 H20.5 Q22.5 1.5 22.5 3.5 V14.5 Q22.5 16.5 20.5 16.5 H12.8 L6.6 23 V16.5 H3.5 Q1.5 16.5 1.5 14.5 V3.5 Q1.5 1.5 3.5 1.5 Z" fill="#c5d5ec" stroke="#3b73b9" stroke-width="3" stroke-linejoin="round"/></svg>
<svg style="position:absolute;left:226px;top:656px;overflow:visible;" width="24" height="25" viewBox="0 0 24 25"><path d="M3.5 1.5 H20.5 Q22.5 1.5 22.5 3.5 V14.5 Q22.5 16.5 20.5 16.5 H12.8 L6.6 23 V16.5 H3.5 Q1.5 16.5 1.5 14.5 V3.5 Q1.5 1.5 3.5 1.5 Z" fill="#c5d5ec" stroke="#3b73b9" stroke-width="3" stroke-linejoin="round"/></svg>
<div class="t " style="left:355.5px;top:232.6px;white-space:nowrap;font-size:21.333px;line-height:24px;color:#000;font-weight:normal;font-style:normal;text-align:left;-webkit-text-stroke-width:0.35px;"><span style="display:inline-block;transform:translateY(2.7px) scale(1.25,1.405);transform-origin:50% 78%;-webkit-text-stroke-width:0;">&#8593;</span> Hover<br>for tips</div>
<svg style="position:absolute;left:390px;top:500.0px;overflow:visible;" width="28" height="28" viewBox="0 0 28 28"><circle cx="14" cy="14" r="14" fill="#6faf78"/><path d="M7.2 15 L13 20.4 L22 8.9" fill="none" stroke="#fff" stroke-width="4.1" stroke-linejoin="round" stroke-linecap="round"/></svg>
<svg style="position:absolute;left:390px;top:550.0px;overflow:visible;" width="28" height="28" viewBox="0 0 28 28"><circle cx="14" cy="14" r="14" fill="#c1272b"/><path d="M8.8 9.2 L19.4 19.4 M19.4 9.2 L8.8 19.4" fill="none" stroke="#fff" stroke-width="4.2" stroke-linecap="round"/></svg>
<svg style="position:absolute;left:390px;top:600.0px;overflow:visible;" width="28" height="28" viewBox="0 0 28 28"><circle cx="14" cy="14" r="14" fill="#6faf78"/><path d="M7.2 15 L13 20.4 L22 8.9" fill="none" stroke="#fff" stroke-width="4.1" stroke-linejoin="round" stroke-linecap="round"/></svg>
<svg style="position:absolute;left:390px;top:650.0px;overflow:visible;" width="28" height="28" viewBox="0 0 28 28"><circle cx="14" cy="14" r="14" fill="#efb155"/><path d="M14 5.6 V15.3" fill="none" stroke="#fff" stroke-width="3.6" stroke-linecap="round"/><circle cx="14" cy="20.6" r="2.2" fill="#fff"/></svg>
<svg style="position:absolute;left:390px;top:700.0px;overflow:visible;" width="28" height="28" viewBox="0 0 28 28"><circle cx="14" cy="14" r="14" fill="#6faf78"/><path d="M7.2 15 L13 20.4 L22 8.9" fill="none" stroke="#fff" stroke-width="4.1" stroke-linejoin="round" stroke-linecap="round"/></svg>
<svg style="position:absolute;left:390px;top:764.0px;overflow:visible;" width="28" height="28" viewBox="0 0 28 28"><circle cx="14" cy="14" r="14" fill="#6faf78"/><path d="M7.2 15 L13 20.4 L22 8.9" fill="none" stroke="#fff" stroke-width="4.1" stroke-linejoin="round" stroke-linecap="round"/></svg>
<svg style="position:absolute;left:390px;top:857.0px;overflow:visible;" width="28" height="28" viewBox="0 0 28 28"><circle cx="14" cy="14" r="14" fill="#6faf78"/><path d="M7.2 15 L13 20.4 L22 8.9" fill="none" stroke="#fff" stroke-width="4.1" stroke-linejoin="round" stroke-linecap="round"/></svg>
<div class="t " style="left:464px;top:447.8px;width:120px;font-size:26.667px;line-height:28.846px;color:#000;font-weight:bold;font-style:normal;text-align:center;-webkit-text-stroke-width:0.22px;transform:translateY(-0.4px) scaleY(1.04);transform-origin:0 0;">A</div>
<div class="t " style="left:464px;top:497.8px;width:120px;font-size:26.667px;line-height:28.846px;color:#000;font-weight:normal;font-style:normal;text-align:center;-webkit-text-stroke-width:0.5px;transform:translateY(-0.4px) scaleY(1.04);transform-origin:0 0;">1</div>
<div class="t " style="left:464px;top:547.8px;width:120px;font-size:26.667px;line-height:28.846px;color:#000;font-weight:normal;font-style:normal;text-align:center;-webkit-text-stroke-width:0.5px;transform:translateY(-0.4px) scaleY(1.04);transform-origin:0 0;"><span class="s">2</span></div>
<div class="t " style="left:464px;top:597.8px;width:120px;font-size:26.667px;line-height:28.846px;color:#000;font-weight:normal;font-style:normal;text-align:center;-webkit-text-stroke-width:0.5px;transform:translateY(-0.4px) scaleY(1.04);transform-origin:0 0;"><span class="s">3</span></div>
<div class="t " style="left:464px;top:647.8px;width:120px;font-size:26.667px;line-height:28.846px;color:#000;font-weight:normal;font-style:normal;text-align:center;-webkit-text-stroke-width:0.5px;transform:translateY(-0.4px) scaleY(1.04);transform-origin:0 0;">4</div>
<div class="t " style="left:464px;top:697.8px;width:120px;font-size:26.667px;line-height:28.846px;color:#000;font-weight:normal;font-style:normal;text-align:center;-webkit-text-stroke-width:0.5px;transform:translateY(-0.4px) scaleY(1.04);transform-origin:0 0;">5</div>
<div class="t " style="left:464px;top:747.8px;width:120px;font-size:26.667px;line-height:28.846px;color:#000;font-weight:normal;font-style:normal;text-align:center;-webkit-text-stroke-width:0.5px;transform:translateY(-0.4px) scaleY(1.04);transform-origin:0 0;">6</div>
<div class="t " style="left:464px;top:825.8px;width:120px;font-size:26.667px;line-height:28.846px;color:#000;font-weight:normal;font-style:normal;text-align:center;-webkit-text-stroke-width:0.5px;transform:translateY(-0.4px) scaleY(1.04);transform-origin:0 0;">7</div>
<div class="t " style="left:464px;top:933.8px;width:120px;font-size:26.667px;line-height:28.846px;color:#000;font-weight:normal;font-style:normal;text-align:center;-webkit-text-stroke-width:0.5px;transform:translateY(-0.4px) scaleY(1.04);transform-origin:0 0;">8</div>
<div class="t " style="left:464px;top:1041.8px;width:120px;font-size:26.667px;line-height:28.846px;color:#000;font-weight:normal;font-style:normal;text-align:center;-webkit-text-stroke-width:0.5px;transform:translateY(-0.4px) scaleY(1.04);transform-origin:0 0;">9</div>
<div class="t " style="left:464px;top:1149.8px;width:120px;font-size:26.667px;line-height:28.846px;color:#000;font-weight:normal;font-style:normal;text-align:center;-webkit-text-stroke-width:0.5px;transform:translateY(-0.4px) scaleY(1.04);transform-origin:0 0;">10</div>
<div class="t " style="left:464px;top:1199.8px;width:120px;font-size:26.667px;line-height:28.846px;color:#000;font-weight:normal;font-style:normal;text-align:center;-webkit-text-stroke-width:0.5px;transform:translateY(-0.4px) scaleY(1.04);transform-origin:0 0;">11</div>
<div class="t " style="left:464px;top:1307.8px;width:120px;font-size:26.667px;line-height:28.846px;color:#000;font-weight:normal;font-style:normal;text-align:center;-webkit-text-stroke-width:0.5px;transform:translateY(-0.4px) scaleY(1.04);transform-origin:0 0;">12</div>
<div class="t " style="left:464px;top:1385.8px;width:120px;font-size:26.667px;line-height:28.846px;color:#000;font-weight:normal;font-style:normal;text-align:center;-webkit-text-stroke-width:0.5px;transform:translateY(-0.4px) scaleY(1.04);transform-origin:0 0;">13</div>
<div class="t " style="left:464px;top:1435.8px;width:120px;font-size:26.667px;line-height:28.846px;color:#000;font-weight:normal;font-style:normal;text-align:center;-webkit-text-stroke-width:0.5px;transform:translateY(-0.4px) scaleY(1.04);transform-origin:0 0;">16</div>
<div class="t " style="left:464px;top:1485.8px;width:120px;font-size:26.667px;line-height:28.846px;color:#000;font-weight:normal;font-style:normal;text-align:center;-webkit-text-stroke-width:0.5px;transform:translateY(-0.4px) scaleY(1.04);transform-origin:0 0;">17</div>
<div class="t " style="left:636.8px;top:237.6px;white-space:nowrap;font-size:32px;line-height:36px;color:#d94437;font-weight:bold;font-style:normal;text-align:left;-webkit-text-stroke-width:0.22px;">CONFIDENTIAL | Company Name Here</div>
<div class="t " style="left:636.4px;top:297.8px;white-space:nowrap;font-size:26.667px;line-height:28.846px;color:#000;font-weight:bold;font-style:normal;text-align:left;-webkit-text-stroke-width:0.22px;transform:translateY(-0.4px) scaleY(1.04);transform-origin:0 0;">Audit Year (FY)</div>
<div class="t " style="left:636.4px;top:347.8px;white-space:nowrap;font-size:26.667px;line-height:28.846px;color:#000;font-weight:bold;font-style:normal;text-align:left;-webkit-text-stroke-width:0.22px;transform:translateY(-0.4px) scaleY(1.04);transform-origin:0 0;">Current Year (CY)</div>
<div class="t " style="left:636.4px;top:397.8px;white-space:nowrap;font-size:26.667px;line-height:28.846px;color:#bdbdbd;font-weight:bold;font-style:italic;text-align:left;-webkit-text-stroke-width:0.22px;transform:translateY(-0.4px) scaleY(1.04);transform-origin:0 0;">Field Work</div>
<div style="position:absolute;left:602px;top:450px;width:24px;height:24px;background:#e6e6e6;box-sizing:border-box;border:2px solid #cdcdcd;border-radius:5px;"></div>
<div style="position:absolute;left:608px;top:460px;width:12px;height:4px;background:#444;border-radius:1px;"></div>
<div class="t " style="left:636.4px;top:447.8px;white-space:nowrap;font-size:26.667px;line-height:28.846px;color:#000;font-weight:bold;font-style:normal;text-align:left;-webkit-text-stroke-width:0.22px;transform:translateY(-0.4px) scaleY(1.04);transform-origin:0 0;">General</div>
<div class="t " style="left:666.2px;top:497.8px;white-space:nowrap;font-size:26.667px;line-height:28.846px;color:#000;font-weight:normal;font-style:normal;text-align:left;-webkit-text-stroke-width:0.5px;transform:translateY(-0.4px) scaleY(1.04);transform-origin:0 0;">Final trial balance as of year end? (in Excel)</div>
<div class="t " style="left:666.2px;top:547.8px;white-space:nowrap;font-size:26.667px;line-height:28.846px;color:#000;font-weight:normal;font-style:normal;text-align:left;-webkit-text-stroke-width:0.5px;transform:translateY(-0.4px) scaleY(1.04);transform-origin:0 0;"><span class="s">Chart of accounts</span></div>
<div class="t " style="left:666.2px;top:597.8px;white-space:nowrap;font-size:26.667px;line-height:28.846px;color:#000;font-weight:normal;font-style:normal;text-align:left;-webkit-text-stroke-width:0.5px;transform:translateY(-0.4px) scaleY(1.04);transform-origin:0 0;"><span class="s">Up-to-date company organizational chart</span></div>
<div class="t " style="left:666.2px;top:647.8px;white-space:nowrap;font-size:26.667px;line-height:28.846px;color:#000;font-weight:normal;font-style:normal;text-align:left;-webkit-text-stroke-width:0.5px;transform:translateY(-0.4px) scaleY(1.04);transform-origin:0 0;">Cash flow statement and worksheets for FY</div>
<div class="t " style="left:666.2px;top:697.8px;white-space:nowrap;font-size:26.667px;line-height:28.846px;color:#000;font-weight:normal;font-style:normal;text-align:left;-webkit-text-stroke-width:0.5px;transform:translateY(-0.4px) scaleY(1.04);transform-origin:0 0;">Listing of all related entities updated as of FY</div>
<div class="t " style="left:666.2px;top:747.8px;white-space:nowrap;font-size:26.667px;line-height:28.846px;color:#000;font-weight:normal;font-style:normal;text-align:left;-webkit-text-stroke-width:0.5px;transform:translateY(-0.4px) scaleY(1.04);transform-origin:0 0;">Listing of all related party transactions during the year (if<br>any)</div>
<div class="t " style="left:666.2px;top:825.8px;white-space:nowrap;font-size:26.667px;line-height:28.846px;color:#000;font-weight:normal;font-style:normal;text-align:left;-webkit-text-stroke-width:0.5px;transform:translateY(-0.4px) scaleY(1.04);transform-origin:0 0;">Board of directors and committee&rsquo; minutes for all<br>meetings. Please provide approved copy of minutes for<br>those available, and drafts of minutes not yet approved.</div>
<div class="t " style="left:666.2px;top:933.8px;white-space:nowrap;font-size:26.667px;line-height:28.846px;color:#000;font-weight:normal;font-style:normal;text-align:left;-webkit-text-stroke-width:0.5px;transform:translateY(-0.4px) scaleY(1.04);transform-origin:0 0;">Listing of all legal expenses or litigation contingencies<br>incurred and/or paid during FY and the current period,<br>with description of services rendered.</div>
<div class="t " style="left:666.2px;top:1041.8px;white-space:nowrap;font-size:26.667px;line-height:28.846px;color:#000;font-weight:normal;font-style:normal;text-align:left;-webkit-text-stroke-width:0.5px;transform:translateY(-0.4px) scaleY(1.04);transform-origin:0 0;">Legal representation letters for certain legal counsel to be<br>selected and review of legal expense detail, to be sent as<br>soon as selections are made.</div>
<div class="t " style="left:666.2px;top:1149.8px;white-space:nowrap;font-size:26.667px;line-height:28.846px;color:#000;font-weight:normal;font-style:normal;text-align:left;-webkit-text-stroke-width:0.5px;transform:translateY(-0.4px) scaleY(1.04);transform-origin:0 0;">Management Representation Letter</div>
<div class="t " style="left:666.2px;top:1199.8px;white-space:nowrap;font-size:26.667px;line-height:28.846px;color:#000;font-weight:normal;font-style:normal;text-align:left;-webkit-text-stroke-width:0.5px;transform:translateY(-0.4px) scaleY(1.04);transform-origin:0 0;">Copies of new leases and significant new contracts<br>entered into during FY (i.e. significant new revenue<br>agreements, purchase / sale agreements, etc.).</div>
<div class="t " style="left:666.2px;top:1307.8px;white-space:nowrap;font-size:26.667px;line-height:28.846px;color:#000;font-weight:normal;font-style:normal;text-align:left;-webkit-text-stroke-width:0.5px;transform:translateY(-0.4px) scaleY(1.04);transform-origin:0 0;">Accounting policy memos for all BS and P&amp;L line items,<br>as applicable</div>
<div class="t " style="left:666.2px;top:1385.8px;white-space:nowrap;font-size:26.667px;line-height:28.846px;color:#000;font-weight:normal;font-style:normal;text-align:left;-webkit-text-stroke-width:0.5px;transform:translateY(-0.4px) scaleY(1.04);transform-origin:0 0;">Completion/update of planning questionnaires provided</div>
<div class="t " style="left:666.2px;top:1435.8px;white-space:nowrap;font-size:26.667px;line-height:28.846px;color:#000;font-weight:normal;font-style:normal;text-align:left;-webkit-text-stroke-width:0.5px;transform:translateY(-0.4px) scaleY(1.04);transform-origin:0 0;">GL Dump of all journal entries made during FY</div>
<div class="t " style="left:666.2px;top:1485.8px;white-space:nowrap;font-size:26.667px;line-height:28.846px;color:#000;font-weight:normal;font-style:normal;text-align:left;-webkit-text-stroke-width:0.5px;transform:translateY(-0.4px) scaleY(1.04);transform-origin:0 0;">SSAE 16 Type II service reports for all service<br>organizations</div>
<div class="t " style="left:1378.7px;top:299.6px;white-space:nowrap;font-size:26.667px;line-height:28.846px;color:#000;font-weight:bold;font-style:normal;text-align:left;-webkit-text-stroke-width:0.22px;transform:translateY(-0.4px) scaleY(1.04);transform-origin:0 0;">Jan-Dec 2020</div>
<div class="t " style="left:1378.7px;top:349.6px;white-space:nowrap;font-size:26.667px;line-height:28.846px;color:#000;font-weight:bold;font-style:normal;text-align:left;-webkit-text-stroke-width:0.22px;transform:translateY(-0.4px) scaleY(1.04);transform-origin:0 0;">Jan-Dec 2021</div>
<div class="t " style="left:1378.7px;top:399.6px;white-space:nowrap;font-size:26.667px;line-height:28.846px;color:#bdbdbd;font-weight:normal;font-style:italic;text-align:left;-webkit-text-stroke-width:0.5px;transform:translateY(-0.4px) scaleY(1.04);transform-origin:0 0;">June 10, 2021 to June 17, 2021</div>
<div class="t " style="left:1378.7px;top:499.6px;white-space:nowrap;font-size:26.667px;line-height:28.846px;color:#000;font-weight:normal;font-style:normal;text-align:left;-webkit-text-stroke-width:0.5px;transform:translateY(-0.4px) scaleY(1.04);transform-origin:0 0;">12/31/20</div>
<div class="t " style="left:1378.7px;top:649.6px;white-space:nowrap;font-size:26.667px;line-height:28.846px;color:#000;font-weight:normal;font-style:normal;text-align:left;-webkit-text-stroke-width:0.5px;transform:translateY(-0.4px) scaleY(1.04);transform-origin:0 0;">12/31/20</div>
<div class="t " style="left:1378.7px;top:699.6px;white-space:nowrap;font-size:26.667px;line-height:28.846px;color:#000;font-weight:normal;font-style:normal;text-align:left;-webkit-text-stroke-width:0.5px;transform:translateY(-0.4px) scaleY(1.04);transform-origin:0 0;">12/31/20</div>
<div class="t " style="left:1378.7px;top:964.6px;white-space:nowrap;font-size:26.667px;line-height:28.846px;color:#000;font-weight:normal;font-style:normal;text-align:left;-webkit-text-stroke-width:0.5px;transform:translateY(-0.4px) scaleY(1.04);transform-origin:0 0;">2020</div>
<div class="t " style="left:1378.7px;top:1230.6px;white-space:nowrap;font-size:26.667px;line-height:28.846px;color:#000;font-weight:normal;font-style:normal;text-align:left;-webkit-text-stroke-width:0.5px;transform:translateY(-0.4px) scaleY(1.04);transform-origin:0 0;">2020</div>
<div class="t " style="left:1378.7px;top:1437.6px;white-space:nowrap;font-size:26.667px;line-height:28.846px;color:#000;font-weight:normal;font-style:normal;text-align:left;-webkit-text-stroke-width:0.5px;transform:translateY(-0.4px) scaleY(1.04);transform-origin:0 0;">2020</div>
<div style="position:absolute;left:1364px;top:390px;width:416px;height:52px;box-sizing:border-box;border:4px solid #6394d0;border-radius:4px;"></div>
<div style="position:absolute;left:1774px;top:436px;width:8px;height:8px;background:#6394d0;"></div>
<div style="position:absolute;left:1792px;top:496px;width:40px;height:40px;border-radius:50%;background:#f4ae67;color:#fff;font-size:21px;line-height:40px;text-align:center;letter-spacing:-0.2px;-webkit-text-stroke-width:0.4px;">JS</div>
<div style="position:absolute;left:1792px;top:596px;width:40px;height:40px;border-radius:50%;background:#f4ae67;color:#fff;font-size:21px;line-height:40px;text-align:center;letter-spacing:-0.2px;-webkit-text-stroke-width:0.4px;">JS</div>
<div class="t " style="left:1842.3px;top:500.8px;white-space:nowrap;font-size:26.667px;line-height:28.846px;color:#000;font-weight:normal;font-style:normal;text-align:left;-webkit-text-stroke-width:0.5px;transform:translateY(0px) scaleY(1.04);transform-origin:0 0;">Jess Smart</div>
<div class="t " style="left:1842.3px;top:600.8px;white-space:nowrap;font-size:26.667px;line-height:28.846px;color:#000;font-weight:normal;font-style:normal;text-align:left;-webkit-text-stroke-width:0.5px;transform:translateY(0px) scaleY(1.04);transform-origin:0 0;"><span class="s">Jess Smart</span></div>
<div class="t" style="left:1793px;top:547.8px;width:209px;overflow:hidden;white-space:nowrap;font-size:26.667px;line-height:28.846px;transform:translateY(-0.4px) scaleY(1.04);transform-origin:0 0;-webkit-text-stroke-width:0.55px;"><span class="s">Kennedy Kerrigan</span></div>
<div class="t " style="left:1793px;top:647.8px;white-space:nowrap;font-size:26.667px;line-height:28.846px;color:#000;font-weight:normal;font-style:normal;text-align:left;-webkit-text-stroke-width:0.5px;transform:translateY(-0.4px) scaleY(1.04);transform-origin:0 0;">Jacob Senmark</div>
<div class="t " style="left:2028.7px;top:497.8px;white-space:nowrap;font-size:26.667px;line-height:28.846px;color:#000;font-weight:normal;font-style:normal;text-align:left;-webkit-text-stroke-width:0.5px;transform:translateY(-0.4px) scaleY(1.04);transform-origin:0 0;">05/01/21</div>
<div class="t " style="left:2028.7px;top:547.8px;white-space:nowrap;font-size:26.667px;line-height:28.846px;color:#000;font-weight:normal;font-style:normal;text-align:left;-webkit-text-stroke-width:0.5px;transform:translateY(-0.4px) scaleY(1.04);transform-origin:0 0;"><span class="s">05/01/21</span></div>
<div class="t " style="left:2028.7px;top:597.8px;white-space:nowrap;font-size:26.667px;line-height:28.846px;color:#000;font-weight:normal;font-style:normal;text-align:left;-webkit-text-stroke-width:0.5px;transform:translateY(-0.4px) scaleY(1.04);transform-origin:0 0;"><span class="s">04/20/21</span></div>
<div class="t " style="left:2028.7px;top:647.8px;white-space:nowrap;font-size:26.667px;line-height:28.846px;color:#000;font-weight:normal;font-style:normal;text-align:left;-webkit-text-stroke-width:0.5px;transform:translateY(-0.4px) scaleY(1.04);transform-origin:0 0;">06/08/21</div>
<div style="position:absolute;left:2256px;top:234px;width:28px;height:28px;background:#fff;box-sizing:border-box;border:2px solid #c6c6c6;border-radius:5px;"></div>
<div style="position:absolute;left:2256px;top:300px;width:28px;height:28px;background:#fff;box-sizing:border-box;border:2px solid #c6c6c6;border-radius:5px;"></div>
<div style="position:absolute;left:2256px;top:350px;width:28px;height:28px;background:#fff;box-sizing:border-box;border:2px solid #c6c6c6;border-radius:5px;"></div>
<div style="position:absolute;left:2256px;top:400px;width:28px;height:28px;background:#fff;box-sizing:border-box;border:2px solid #c6c6c6;border-radius:5px;"></div>
<div style="position:absolute;left:2256px;top:500px;width:28px;height:28px;background:#fff;box-sizing:border-box;border:2px solid #c6c6c6;border-radius:5px;"></div>
<svg style="position:absolute;left:2256px;top:550px;overflow:visible;" width="28" height="28" viewBox="0 0 28 28"><rect width="28" height="28" rx="5" fill="#2672e0"/><path d="M6.2 15 L12.6 21 L23 8.8" fill="none" stroke="#fff" stroke-width="4" stroke-linejoin="miter"/></svg>
<svg style="position:absolute;left:2256px;top:600px;overflow:visible;" width="28" height="28" viewBox="0 0 28 28"><rect width="28" height="28" rx="5" fill="#2672e0"/><path d="M6.2 15 L12.6 21 L23 8.8" fill="none" stroke="#fff" stroke-width="4" stroke-linejoin="miter"/></svg>
<div style="position:absolute;left:2256px;top:650px;width:28px;height:28px;background:#fff;box-sizing:border-box;border:2px solid #c6c6c6;border-radius:5px;"></div>
<div style="position:absolute;left:2256px;top:700px;width:28px;height:28px;background:#fff;box-sizing:border-box;border:2px solid #c6c6c6;border-radius:5px;"></div>
<div style="position:absolute;left:2256px;top:750px;width:28px;height:28px;background:#fff;box-sizing:border-box;border:2px solid #c6c6c6;border-radius:5px;"></div>
<div style="position:absolute;left:2256px;top:828px;width:28px;height:28px;background:#fff;box-sizing:border-box;border:2px solid #c6c6c6;border-radius:5px;"></div>
<div style="position:absolute;left:2256px;top:936px;width:28px;height:28px;background:#fff;box-sizing:border-box;border:2px solid #c6c6c6;border-radius:5px;"></div>
<div style="position:absolute;left:2256px;top:1044px;width:28px;height:28px;background:#fff;box-sizing:border-box;border:2px solid #c6c6c6;border-radius:5px;"></div>
<div style="position:absolute;left:2256px;top:1152px;width:28px;height:28px;background:#fff;box-sizing:border-box;border:2px solid #c6c6c6;border-radius:5px;"></div>
<div style="position:absolute;left:2256px;top:1232.0px;width:28px;height:28px;background:#fff;box-sizing:border-box;border:2px solid #c6c6c6;border-radius:5px;"></div>
<div style="position:absolute;left:2256px;top:1324.5px;width:28px;height:28px;background:#fff;box-sizing:border-box;border:2px solid #c6c6c6;border-radius:5px;"></div>
<div style="position:absolute;left:2256px;top:1388px;width:28px;height:28px;background:#fff;box-sizing:border-box;border:2px solid #c6c6c6;border-radius:5px;"></div>
<div style="position:absolute;left:2256px;top:1438px;width:28px;height:28px;background:#fff;box-sizing:border-box;border:2px solid #c6c6c6;border-radius:5px;"></div>
<div style="position:absolute;left:2256px;top:1502.5px;width:28px;height:28px;background:#fff;box-sizing:border-box;border:2px solid #c6c6c6;border-radius:5px;"></div>
<div class="t " style="left:2370.5px;top:547.8px;white-space:nowrap;font-size:26.667px;line-height:28.846px;color:#000;font-weight:normal;font-style:normal;text-align:left;-webkit-text-stroke-width:0.5px;transform:translateY(-0.4px) scaleY(1.04);transform-origin:0 0;"><span class="s">04/27/21</span></div>
<div class="t " style="left:2370.5px;top:597.8px;white-space:nowrap;font-size:26.667px;line-height:28.846px;color:#000;font-weight:normal;font-style:normal;text-align:left;-webkit-text-stroke-width:0.5px;transform:translateY(-0.4px) scaleY(1.04);transform-origin:0 0;"><span class="s">04/17/21</span></div>
<div class="t" style="left:2562.2px;top:597.8px;width:177.80000000000018px;overflow:hidden;white-space:nowrap;font-size:26.667px;line-height:28.846px;transform:translateY(-0.4px) scaleY(1.04);transform-origin:0 0;-webkit-text-stroke-width:0.55px;"><span class="s">As of 03/17/21</span></div>
<div class="t" style="left:2562.2px;top:647.8px;width:177.80000000000018px;overflow:hidden;white-space:nowrap;font-size:26.667px;line-height:28.846px;transform:translateY(-0.4px) scaleY(1.04);transform-origin:0 0;-webkit-text-stroke-width:0.55px;">Link to CFS attached</div>
<div style="position:absolute;left:48px;top:1544px;width:2726px;height:34px;background:#fff;"></div>
<div style="position:absolute;left:0px;top:1544px;width:180px;height:34px;background:#f7f6f5;"></div>
<svg style="position:absolute;left:2808px;top:120px;overflow:visible;" width="40" height="36" viewBox="0 0 40 36"><path d="M1.5 1.5 H38.5 V28.5 H16.5 L9.8 33.8 L8.6 28.5 H1.5 Z" fill="none" stroke="#404040" stroke-width="3" stroke-linecap="round" stroke-linejoin="round"/></svg>
<svg style="position:absolute;left:2808px;top:212px;overflow:visible;" width="40" height="40" viewBox="0 0 40 40"><path d="M20.43 31.91 L16.67 35.69 A8.89 8.89 0 0 1 4.09 23.11 L23.11 4.09 A8.89 8.89 0 0 1 35.69 16.67 L26.88 25.47 A5.27 5.27 0 0 1 19.42 18.01 L26.17 11.06" fill="none" stroke="#404040" stroke-width="3" stroke-linecap="round" stroke-linejoin="round"/></svg>
<svg style="position:absolute;left:2808px;top:307.5px;overflow:visible;" width="40" height="42" viewBox="0 0 40 42"><path d="M11.5 1.8 H28.5 M8.5 8 H31.5" fill="none" stroke="#404040" stroke-width="3" stroke-linecap="round" stroke-linejoin="round"/><path d="M1.5 14 H38.5 V31 Q38.5 39.5 30 39.5 H1.5 Z" fill="none" stroke="#404040" stroke-width="3" stroke-linecap="round" stroke-linejoin="round"/><path d="M29 39.5 V30 H38.5" fill="none" stroke="#404040" stroke-width="3" stroke-linecap="round" stroke-linejoin="round"/></svg>
<svg style="position:absolute;left:2808px;top:405px;overflow:visible;" width="40" height="38" viewBox="0 0 40 38"><path d="M17 3.2 A16 16 0 0 1 32.5 29.5" fill="none" stroke="#404040" stroke-width="3" stroke-linecap="round" stroke-linejoin="round"/><path d="M23 35 A16 16 0 0 1 7.2 9" fill="none" stroke="#404040" stroke-width="3" stroke-linecap="round" stroke-linejoin="round"/><path d="M3.2 6.2 L10.6 4.4 L12.3 11.8" fill="none" stroke="#404040" stroke-width="3" stroke-linecap="round" stroke-linejoin="round"/><path d="M36.8 31.6 L29.4 33.4 L27.7 26" fill="none" stroke="#404040" stroke-width="3" stroke-linecap="round" stroke-linejoin="round"/><path d="M14.3 19.3 L18.5 23.5 L26.3 15.3" fill="none" stroke="#404040" stroke-width="3" stroke-linecap="round" stroke-linejoin="round"/></svg>
<svg style="position:absolute;left:2812px;top:500px;overflow:visible;" width="32" height="40" viewBox="0 0 32 40"><path d="M1.5 1.5 H19.5 Q30.5 1.5 30.5 12.5 V38.5 H1.5 Z" fill="none" stroke="#404040" stroke-width="3" stroke-linecap="round" stroke-linejoin="round"/><path d="M19.5 1.5 V12.5 H30.5" fill="none" stroke="#404040" stroke-width="3" stroke-linecap="round" stroke-linejoin="round"/><path d="M16 32 V19.5 M10.4 24.6 L16 19 L21.6 24.6" fill="none" stroke="#404040" stroke-width="3" stroke-linecap="round" stroke-linejoin="round"/></svg>
<svg style="position:absolute;left:2808px;top:596px;overflow:visible;" width="40" height="40" viewBox="0 0 40 40"><circle cx="20" cy="20" r="18.5" fill="none" stroke="#404040" stroke-width="3" stroke-linecap="round" stroke-linejoin="round"/><path d="M7 19.5 H14.5 L18 13 L24.6 27 L27.5 19.5 H33" fill="none" stroke="#404040" stroke-width="3" stroke-linecap="round" stroke-linejoin="round"/></svg>
<svg style="position:absolute;left:2808px;top:692px;overflow:visible;" width="40" height="40" viewBox="0 0 40 40"><path d="M9.5 6.5 V1.5 H38.5 V27 Q38.5 38.5 27 38.5 H9.5 V33.5" fill="none" stroke="#404040" stroke-width="3" stroke-linecap="round" stroke-linejoin="round"/><path d="M27 38.5 V27 H38.5" fill="none" stroke="#404040" stroke-width="3" stroke-linecap="round" stroke-linejoin="round"/><rect x="1.5" y="7.5" width="15" height="25" rx="1.5" fill="none" stroke="#404040" stroke-width="3" stroke-linecap="round" stroke-linejoin="round"/><path d="M7 14.7 H11 M7 20 H11 M7 25.3 H11" fill="none" stroke="#404040" stroke-width="3" stroke-linecap="round" stroke-linejoin="round"/></svg>
<svg style="position:absolute;left:2811px;top:787px;overflow:visible;" width="34" height="42" viewBox="0 0 34 42"><path d="M17 0.5 C24.5 0.5 27 7 27 13 C27 19 21 26 17 31 C13 26 7 19 7 13 C7 7 9.5 0.5 17 0.5 Z" fill="#404040"/><path d="M6.3 3.3 C1.5 7 -0.8 14 3 20.8 C5.5 25.3 9.5 29 12.8 32 C9 26.5 4.2 20.5 3.8 13.2 C3.6 9.5 4.6 6 6.3 3.3 Z" fill="#404040"/><path d="M27.7 3.3 C32.5 7 34.8 14 31 20.8 C28.5 25.3 24.5 29 21.2 32 C25 26.5 29.8 20.5 30.2 13.2 C30.4 9.5 29.4 6 27.7 3.3 Z" fill="#404040"/><path d="M12.6 34 H21.4 L20.6 39 Q20.3 41 18.3 41 H15.7 Q13.7 41 13.4 39 Z" fill="#404040"/></svg>
<svg style="position:absolute;left:2808px;top:884px;overflow:visible;" width="40" height="40" viewBox="0 0 40 40"><rect x="1.5" y="1.5" width="37" height="37" rx="1" fill="none" stroke="#404040" stroke-width="3" stroke-linecap="round" stroke-linejoin="round"/><path d="M10.8 19.5 V30 M17 9.5 V30 M23.2 15.5 V30 M29.4 21.5 V30" fill="none" stroke="#404040" stroke-width="2.6" stroke-linecap="round" stroke-linejoin="round"/></svg>
<div style="position:absolute;left:2802px;top:952px;width:52px;height:2px;background:#e0e0e0;"></div>
<svg style="position:absolute;left:2812px;top:986px;overflow:visible;" width="32" height="32" viewBox="0 0 32 32"><path d="M0 0 H14 V14 H0 Z M18 0 H32 V14 H18 Z M0 18 H14 V32 H0 Z M18 18 H32 V32 H18 Z" fill="#999"/></svg>
<svg style="position:absolute;left:2808px;top:1078px;overflow:visible;" width="40" height="40" viewBox="0 0 40 40"><path d="M20 0 L40 20 L20 40 L0 20 Z M20 13.5 L13.5 20 L20 26.5 L26.5 20 Z" fill="#999" fill-rule="evenodd"/></svg>
<svg style="position:absolute;left:2807px;top:1181px;overflow:visible;" width="42" height="28" viewBox="0 0 42 28"><circle cx="11.2" cy="7.8" r="7.1" fill="#999"/><circle cx="22.6" cy="8.1" r="6.7" fill="#999"/><circle cx="32.5" cy="12.8" r="8.3" fill="#999"/><circle cx="7.7" cy="16.3" r="6.6" fill="#999"/><circle cx="15.8" cy="19.9" r="6.9" fill="#999"/><circle cx="25" cy="17.4" r="6" fill="#999"/><rect x="8" y="8" width="25" height="12" fill="#999"/></svg>
</div></body></html>
